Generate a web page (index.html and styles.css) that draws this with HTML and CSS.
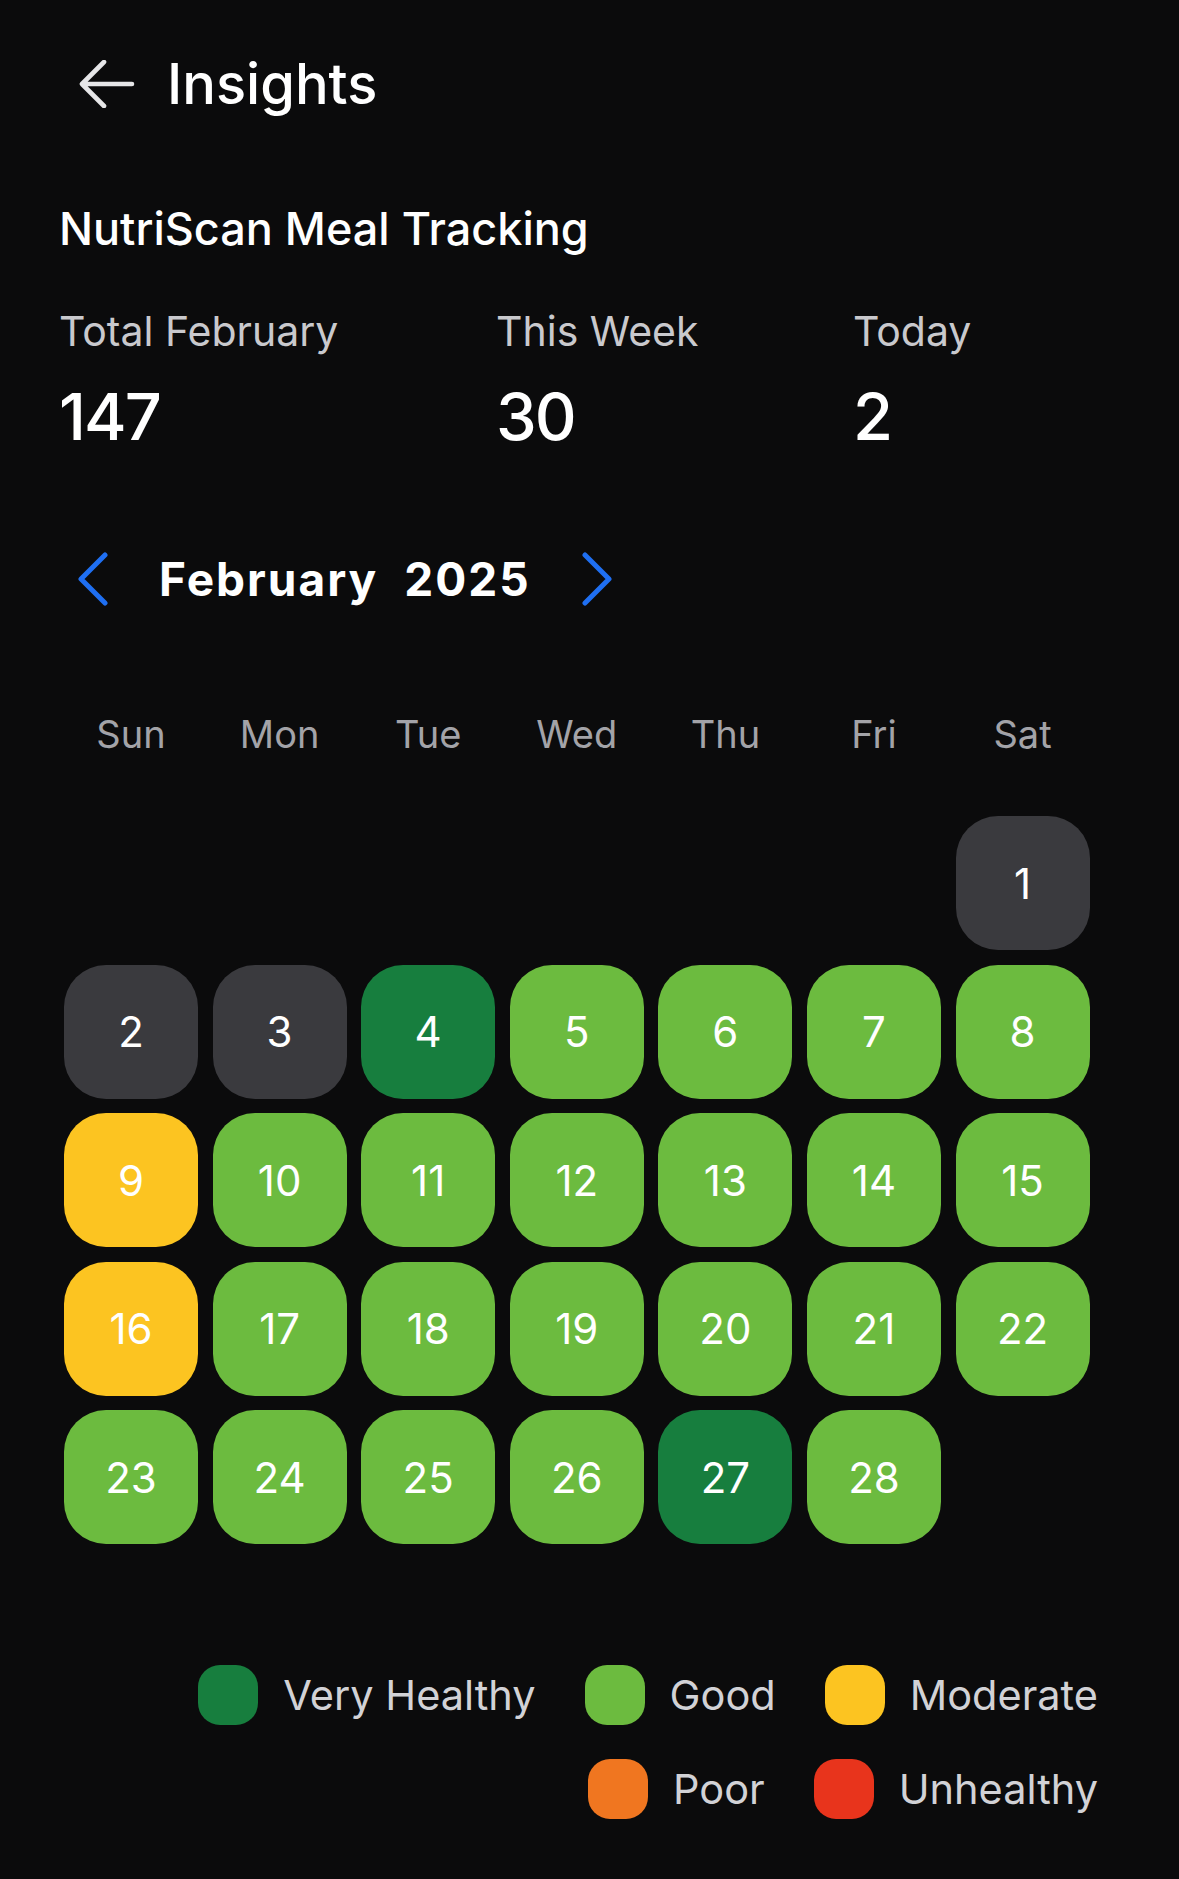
FILE: index.html
```html
<!DOCTYPE html>
<html lang="en">
<head>
<meta charset="utf-8">
<title>Insights</title>
<link rel="stylesheet" href="styles.css">
</head>
<body>
<div class="screen">
  <header class="header">
    <svg class="back" viewBox="0 0 56 48" width="56" height="48" aria-hidden="true">
      <path d="M53 24 H3 M25 2 L3 24 L25 46" fill="none" stroke="#e6e6e8" stroke-width="4.6" stroke-linecap="round" stroke-linejoin="round"/>
    </svg>
    <h1 class="header-title">Insights</h1>
  </header>

  <h2 class="section-title">NutriScan Meal Tracking</h2>

  <div class="stats">
    <div class="stat stat-total">
      <div class="stat-label">Total February</div>
      <div class="stat-value">147</div>
    </div>
    <div class="stat stat-week">
      <div class="stat-label">This Week</div>
      <div class="stat-value">30</div>
    </div>
    <div class="stat">
      <div class="stat-label">Today</div>
      <div class="stat-value">2</div>
    </div>
  </div>

  <div class="month-nav">
    <svg class="chev" viewBox="0 0 32 54" width="32" height="54" aria-hidden="true">
      <path d="M28 3 L4 27 L28 51" fill="none" stroke="#1f6ff2" stroke-width="5" stroke-linecap="round" stroke-linejoin="round"/>
    </svg>
    <div class="month-label"><span>February</span><span>2025</span></div>
    <svg class="chev" viewBox="0 0 32 54" width="32" height="54" aria-hidden="true">
      <path d="M4 3 L28 27 L4 51" fill="none" stroke="#1f6ff2" stroke-width="5" stroke-linecap="round" stroke-linejoin="round"/>
    </svg>
  </div>

  <div class="weekdays">
    <div>Sun</div><div>Mon</div><div>Tue</div><div>Wed</div><div>Thu</div><div>Fri</div><div>Sat</div>
  </div>

  <div class="calendar">
    <div class="blank"></div><div class="blank"></div><div class="blank"></div><div class="blank"></div><div class="blank"></div><div class="blank"></div>
    <div class="day none">1</div>
    <div class="day none">2</div>
    <div class="day none">3</div>
    <div class="day very">4</div>
    <div class="day good">5</div>
    <div class="day good">6</div>
    <div class="day good">7</div>
    <div class="day good">8</div>
    <div class="day moderate">9</div>
    <div class="day good">10</div>
    <div class="day good">11</div>
    <div class="day good">12</div>
    <div class="day good">13</div>
    <div class="day good">14</div>
    <div class="day good">15</div>
    <div class="day moderate">16</div>
    <div class="day good">17</div>
    <div class="day good">18</div>
    <div class="day good">19</div>
    <div class="day good">20</div>
    <div class="day good">21</div>
    <div class="day good">22</div>
    <div class="day good">23</div>
    <div class="day good">24</div>
    <div class="day good">25</div>
    <div class="day good">26</div>
    <div class="day very">27</div>
    <div class="day good">28</div>
  </div>

  <div class="legend">
    <div class="legend-row">
      <div class="legend-item"><span class="swatch very"></span><span class="legend-text">Very Healthy</span></div>
      <div class="legend-item"><span class="swatch good"></span><span class="legend-text">Good</span></div>
      <div class="legend-item"><span class="swatch moderate"></span><span class="legend-text">Moderate</span></div>
    </div>
    <div class="legend-row">
      <div class="legend-item"><span class="swatch poor"></span><span class="legend-text">Poor</span></div>
      <div class="legend-item"><span class="swatch unhealthy"></span><span class="legend-text">Unhealthy</span></div>
    </div>
  </div>
</div>
</body>
</html>
```

FILE: styles.css
```css
* { box-sizing: border-box; }

html, body {
  margin: 0;
  padding: 0;
  background: #0b0b0c;
}

body {
  font-family: Inter, "Noto Sans", "Liberation Sans", sans-serif;
  color: #ffffff;
}

.screen {
  width: 1179px;
  min-height: 1879px;
  background: #0b0b0c;
}

.header {
  height: 168px;
  display: flex;
  align-items: center;
  padding-left: 79px;
  gap: 32px;
}

.back { display: block; flex: none; }

.header-title {
  margin: 0;
  font-size: 56px;
  font-weight: 500;
  line-height: 1;
  color: #ffffff;
}

.section-title {
  margin: 38px 0 0 59px;
  font-size: 45px;
  font-weight: 500;
  line-height: 1;
  color: #ffffff;
}

.stats {
  display: flex;
  margin: 60px 0 0 59px;
}

.stat-total { width: 437px; }
.stat-week { width: 357px; }

.stat-label {
  font-size: 41px;
  line-height: 1;
  font-weight: 400;
  color: #c9c9cd;
}

.stat-value {
  margin-top: 32px;
  font-size: 65px;
  line-height: 1;
  font-weight: 500;
  letter-spacing: -2px;
  color: #ffffff;
}

.month-nav {
  margin: 100px 0 0 77px;
  height: 60px;
  display: flex;
  align-items: center;
  gap: 50px;
}

.chev { display: block; flex: none; }

.month-label {
  display: flex;
  gap: 26px;
  font-size: 46px;
  font-weight: 700;
  letter-spacing: 2px;
  line-height: 1;
  color: #ffffff;
}

.weekdays {
  margin: 106px 0 0 64px;
  display: grid;
  grid-template-columns: repeat(7, 134px);
  column-gap: 14.6px;
  font-size: 38px;
  line-height: 1;
  color: #a3a3a8;
  text-align: center;
}

.calendar {
  margin: 63px 0 0 64px;
  display: grid;
  grid-template-columns: repeat(7, 134px);
  grid-auto-rows: 134px;
  gap: 14.6px;
}

.day {
  border-radius: 42px;
  display: flex;
  align-items: center;
  justify-content: center;
  font-size: 42px;
  font-weight: 400;
  color: #ffffff;
}

.none { background: #3a3a3e; }
.very { background: #177e3e; }
.good { background: #6cbb3f; }
.moderate { background: #fcc421; }
.poor { background: #f07620; }
.unhealthy { background: #e8341c; }

.legend {
  margin-top: 121px;
  padding-right: 81px;
  display: flex;
  flex-direction: column;
  gap: 34px;
}

.legend-row {
  display: flex;
  justify-content: flex-end;
  gap: 49px;
}

.legend-item {
  display: flex;
  align-items: center;
  gap: 25px;
  height: 60px;
}

.swatch {
  width: 60px;
  height: 60px;
  border-radius: 22px;
  flex: none;
}

.legend-text {
  font-size: 41.5px;
  line-height: 1;
  color: #d2d2d6;
}
```
